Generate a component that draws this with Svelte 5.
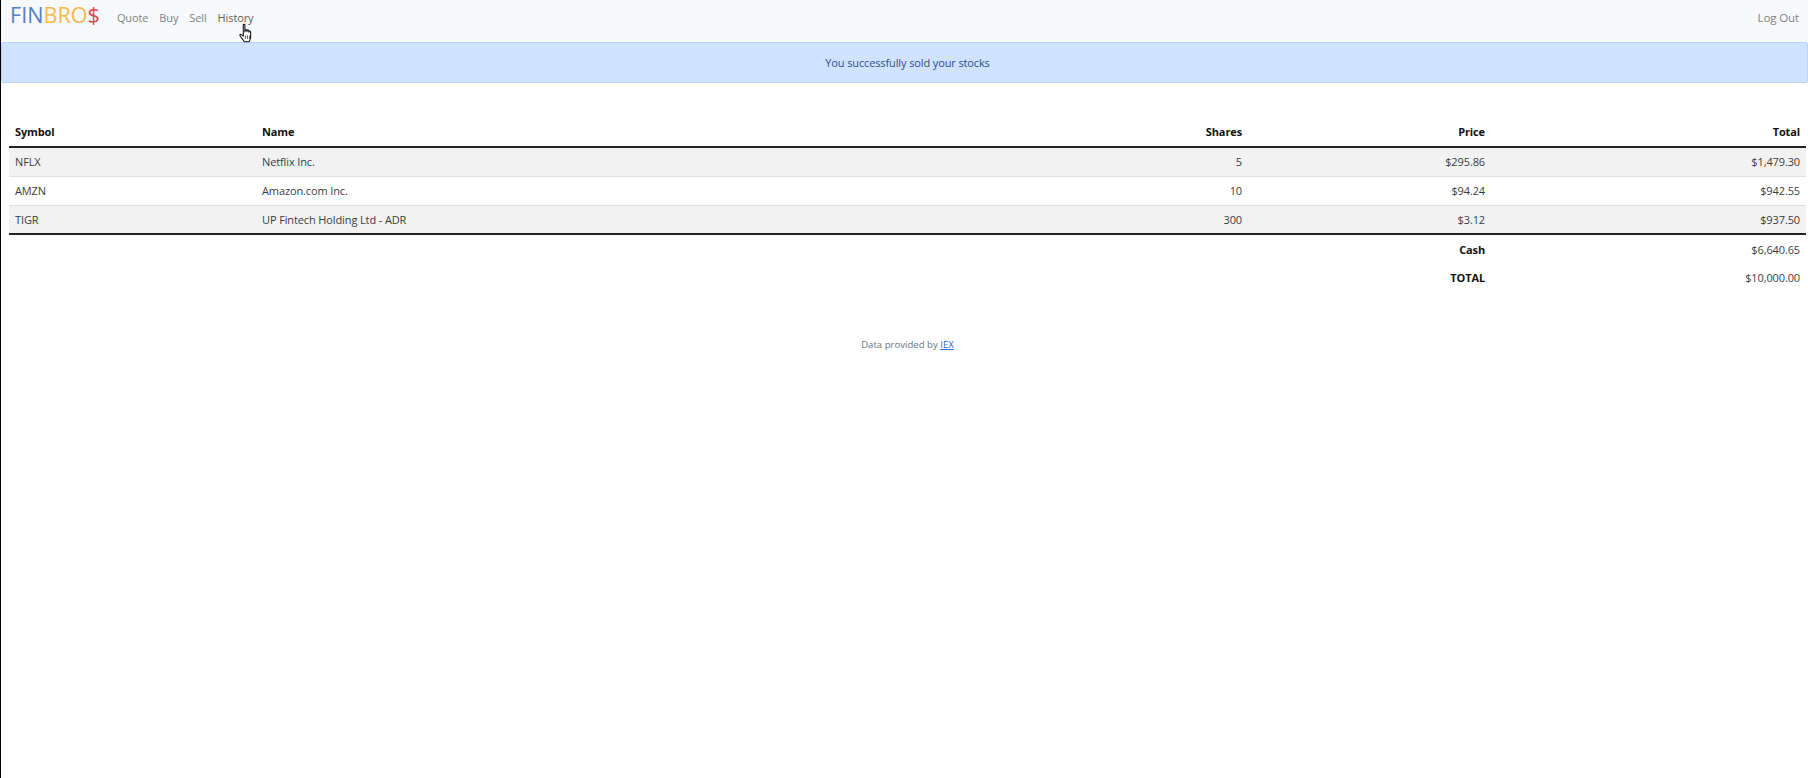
<script>
  // portfolio rows, already formatted the way the page prints them
  const rows = [
    { symbol: 'NFLX', name: 'Netflix Inc.', shares: 5, price: '$295.86', total: '$1,479.30' },
    { symbol: 'AMZN', name: 'Amazon.com Inc.', shares: 10, price: '$94.24', total: '$942.55' },
    { symbol: 'TIGR', name: 'UP Fintech Holding Ltd - ADR', shares: 300, price: '$3.12', total: '$937.50' }
  ];
  const links = ['Quote', 'Buy', 'Sell', 'History'];
</script>

<div class="page">
  <nav class="navbar">
    <a class="brand" href="/"><span class="blue">FIN</span><span class="yellow">BRO</span><span class="red">$</span></a>
    <ul class="links">
      {#each links as link}
        <li class:hover={link === 'History'}>{link}</li>
      {/each}
    </ul>
    <span class="logout">Log Out</span>
    <svg class="cursor" width="15" height="22" viewBox="0 0 14 20" aria-hidden="true">
      <path d="M4 1.600c0-.9 1.500-.9 1.500 0V8l.3-1.600c.2-.8 1.400-.7 1.500.1l.1 1.300.3-1c.3-.7 1.300-.5 1.400.2l.1 1.300.3-.7c.3-.6 1.200-.4 1.300.3.2 2 .2 4.200-.2 6.100-.3 1.300-.8 2.200-1.100 3.200H4.900c-.6-1.400-1.800-2.700-3-4.200-.7-.9-1.300-1.800-1-2.400.3-.6 1-.5 1.500 0L4 12z" fill="#fff" stroke="#111" stroke-width="1" stroke-linejoin="round"/>
      <path d="M6 11.500v3M8 11.500v3M10 11.500v3" stroke="#111" stroke-width=".7"/>
    </svg>
  </nav>

  <header class="alert">You successfully sold your stocks</header>

  <main>
    <table>
      <colgroup>
        <col class="c-symbol" /><col /><col class="c-shares" /><col class="c-price" /><col class="c-total" />
      </colgroup>
      <thead>
        <tr>
          <th>Symbol</th>
          <th>Name</th>
          <th class="end">Shares</th>
          <th class="end">Price</th>
          <th class="end">Total</th>
        </tr>
      </thead>
      <tbody>
        {#each rows as row}
          <tr>
            <td>{row.symbol}</td>
            <td>{row.name}</td>
            <td class="end">{row.shares}</td>
            <td class="end">{row.price}</td>
            <td class="end">{row.total}</td>
          </tr>
        {/each}
      </tbody>
      <tfoot>
        <tr>
          <td colspan="3"></td>
          <th class="end">Cash</th>
          <td class="end">$6,640.65</td>
        </tr>
        <tr>
          <td colspan="3"></td>
          <th class="end">TOTAL</th>
          <td class="end">$10,000.00</td>
        </tr>
      </tfoot>
    </table>
  </main>

  <footer>Data provided by <a href="/">IEX</a></footer>
</div>

<style>
  :global(body) {
    margin: 0;
    background: #fff;
  }
  .page {
    box-sizing: border-box;
    min-height: 778px;
    border-left: 1px solid #000;
    font-family: "Open Sans", "Noto Sans", sans-serif;
    font-size: 11px;
    letter-spacing: -0.12px;
    color: #3a3d40;
  }
  .navbar {
    position: relative;
    display: flex;
    align-items: center;
    box-sizing: border-box;
    height: 42px;
    padding: 0 9px 7px 9px;
    background: #f8f9fa;
  }
  .brand {
    font-size: 21.6px;
    line-height: 1;
    letter-spacing: 0;
    text-decoration: none;
    margin-bottom: 5px;
  }
  .blue { color: #5580c0; }
  .yellow { color: #f6b84e; }
  .red { color: #dc4650; }
  .links {
    display: flex;
    gap: 11px;
    margin: 0 0 0 17px;
    padding: 0;
    list-style: none;
    color: #808285;
  }
  .hover { color: #5c5f62; }
  .logout {
    margin-left: auto;
    color: #808285;
    font-size: 11.5px;
  }
  .cursor {
    position: absolute;
    left: 238px;
    top: 23px;
  }
  .alert {
    box-sizing: border-box;
    height: 41px;
    padding-left: 6px;
    line-height: 39px;
    text-align: center;
    color: #2f5086;
    background: #cfe2ff;
    border: 1px solid #b6d4fe;
    border-radius: 2px;
  }
  main {
    padding: 34px 2px 0 8px;
  }
  table {
    width: 100%;
    border-collapse: collapse;
    table-layout: fixed;
  }
  .c-symbol { width: 248px; }
  .c-shares { width: 120px; }
  .c-price { width: 243px; }
  .c-total { width: 316px; }
  th, td {
    height: 29px;
    padding: 0 5px;
    box-sizing: border-box;
    text-align: left;
    font-weight: 400;
    border-bottom: 1px solid #dee2e6;
  }
  th { font-weight: 700; color: #111; }
  .end { text-align: right; }
  th:first-child, td:first-child { padding-left: 6px; }
  th:last-child, td:last-child { padding-right: 6px; }
  thead th { height: 30px; border-bottom: 2px solid #212529; }
  tbody tr:nth-child(odd) td { background: #f2f2f2; }
  tbody tr:last-child td { border-bottom: 2px solid #212529; }
  tfoot td, tfoot th { border-bottom: 0; }
  footer {
    margin-top: 46px;
    padding-left: 6px;
    text-align: center;
    font-size: 9.6px;
    letter-spacing: 0;
    color: #6c757d;
  }
  footer a { color: #2f6fe0; }
</style>
